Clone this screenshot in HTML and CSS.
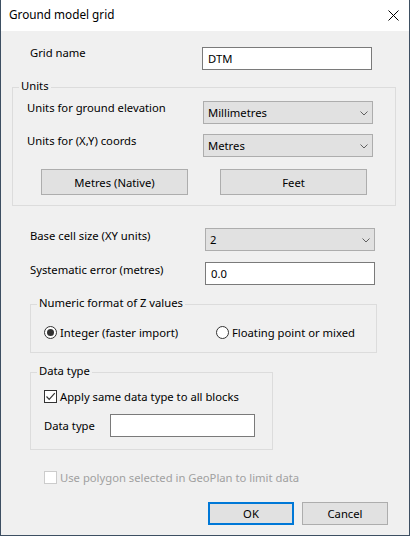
FILE: index.html
```html
<!DOCTYPE html>
<html>
<head>
<meta charset="utf-8">
<link rel="stylesheet" href="styles.css">
</head>
<body>
<div class="window">
  <div class="titlebar">
    <span class="title">Ground model grid</span>
    <svg class="close" width="11" height="11" viewBox="0 0 11 11"><path d="M0.5 0.5 L10.5 10.5 M10.5 0.5 L0.5 10.5" stroke="#000" stroke-width="1" fill="none"/></svg>
  </div>
  <div class="content">
    <div class="row gridname">
      <span class="label lbl-grid">Grid name</span>
      <div class="textbox tb-name">DTM</div>
    </div>

    <fieldset class="group units">
      <legend>Units</legend>
      <div class="group-body units-body">
        <div class="row">
          <span class="label lbl-units">Units for ground elevation</span>
          <div class="select">Millimetres<svg class="chev" width="8" height="5" viewBox="0 0 8 5"><path d="M0.5 0.5 L4 4 L7.5 0.5" stroke="#606060" stroke-width="1" fill="none"/></svg></div>
        </div>
        <div class="row row-gap">
          <span class="label lbl-units">Units for (X,Y) coords</span>
          <div class="select">Metres<svg class="chev" width="8" height="5" viewBox="0 0 8 5"><path d="M0.5 0.5 L4 4 L7.5 0.5" stroke="#606060" stroke-width="1" fill="none"/></svg></div>
        </div>
        <div class="btnrow">
          <div class="btn unitbtn">Metres (Native)</div>
          <div class="btn unitbtn">Feet</div>
        </div>
      </div>
    </fieldset>

    <div class="row basecell">
      <span class="label lbl-main">Base cell size (XY units)</span>
      <div class="select">2<svg class="chev" width="8" height="5" viewBox="0 0 8 5"><path d="M0.5 0.5 L4 4 L7.5 0.5" stroke="#606060" stroke-width="1" fill="none"/></svg></div>
    </div>
    <div class="row syserr">
      <span class="label lbl-main">Systematic error (metres)</span>
      <div class="textbox tb-main">0.0</div>
    </div>

    <fieldset class="group numeric">
      <legend>Numeric format of Z values</legend>
      <div class="group-body numeric-body">
        <div class="option opt-first"><span class="radio checked"></span><span>Integer (faster import)</span></div>
        <div class="option"><span class="radio"></span><span>Floating point or mixed</span></div>
      </div>
    </fieldset>

    <fieldset class="group datatype">
      <legend>Data type</legend>
      <div class="group-body datatype-body">
        <div class="option"><span class="checkbox"><svg width="11" height="11" viewBox="0 0 11 11"><path d="M1.5 5.5 L4.2 8.3 L9.8 2.2" stroke="#333" stroke-width="1.2" fill="none"/></svg></span><span>Apply same data type to all blocks</span></div>
        <div class="row dtrow">
          <span class="label lbl-dt">Data type</span>
          <div class="textbox tb-dt"></div>
        </div>
      </div>
    </fieldset>

    <div class="option disabled"><span class="checkbox off"></span><span>Use polygon selected in GeoPlan to limit data</span></div>

    <div class="footer">
      <div class="btn dlgbtn default">OK</div>
      <div class="btn dlgbtn">Cancel</div>
    </div>
  </div>
</div>
</body>
</html>
```

FILE: styles.css
```css
html, body {
  margin: 0;
  padding: 0;
  background: #f0f0f0;
}
body {
  font-family: "Noto Sans", "Liberation Sans", sans-serif;
  font-size: 11.25px;
  line-height: 15px;
  color: #000;
}
.window {
  width: 410px;
  height: 536px;
  box-sizing: border-box;
  border: 1px solid #3d4f62;
  border-top: none;
  background: #f0f0f0;
  display: flex;
  flex-direction: column;
}
.titlebar {
  height: 31px;
  background: #fff;
  display: flex;
  align-items: flex-start;
  justify-content: space-between;
  flex-shrink: 0;
}
.title {
  font-size: 11.75px;
  margin: 7px 0 0 8px;
}
.close {
  margin: 10px 10px 0 0;
}
.content {
  padding-top: 16px;
  display: flex;
  flex-direction: column;
  align-items: flex-start;
}
.row {
  display: flex;
  align-items: flex-start;
  height: 23px;
}
.label {
  flex-shrink: 0;
}
.gridname {
  margin-left: 29px;
}
.lbl-grid {
  width: 172px;
  margin-top: -2px;
}
.textbox {
  box-sizing: border-box;
  height: 23px;
  background: #fff;
  border: 1px solid #7a7a7a;
  padding: 3px 0 0 5px;
}
.tb-name { width: 170px; }
.tb-main { width: 170px; }
.tb-dt { width: 145px; }

.group {
  margin: 0;
  padding: 0;
  border: 1px solid #dcdcdc;
  min-inline-size: 0;
  box-sizing: border-box;
}
.group legend {
  padding: 0 2px 4px;
  margin-left: 6px;
  line-height: 15px;
}
.units {
  margin: 8px 0 0 11px;
  width: 384px;
}
.units-body {
  padding: 4px 0 10px 14px;
}
.lbl-units {
  width: 176px;
  margin-top: -1px;
}
.row-gap {
  margin-top: 10px;
}
.select {
  box-sizing: border-box;
  width: 170px;
  height: 23px;
  background: #e1e1e1;
  border: 1px solid #adadad;
  padding: 0 4px 0 4px;
  display: flex;
  align-items: center;
  justify-content: space-between;
}
.chev {
  margin-top: 1px;
}
.btnrow {
  display: flex;
  gap: 32px;
  margin: 12px 0 0 14px;
}
.btn {
  box-sizing: border-box;
  background: #e1e1e1;
  border: 1px solid #adadad;
  display: flex;
  align-items: center;
  justify-content: center;
}
.unitbtn {
  width: 147px;
  height: 26px;
}

.basecell {
  margin: 22px 0 0 29px;
}
.lbl-main {
  width: 175px;
}
.syserr {
  margin: 11px 0 0 29px;
}

.numeric {
  margin: 10px 0 0 29px;
  width: 347px;
}
.numeric-body {
  display: flex;
  padding: 11px 0 12px 13px;
}
.option {
  display: flex;
  align-items: center;
  gap: 3px;
  height: 15px;
}
.opt-first {
  width: 172px;
}
.radio {
  box-sizing: border-box;
  width: 13px;
  height: 13px;
  border: 1px solid #333;
  border-radius: 50%;
  background: #fff;
  display: flex;
  align-items: center;
  justify-content: center;
}
.radio.checked::after {
  content: "";
  width: 7px;
  height: 7px;
  border-radius: 50%;
  background: #333;
}

.datatype {
  margin: 10px 0 0 29px;
  width: 243px;
}
.datatype-body {
  padding: 7px 0 12px 13px;
}
.checkbox {
  box-sizing: border-box;
  width: 13px;
  height: 13px;
  border: 1px solid #333;
  background: #fff;
  display: flex;
  align-items: center;
  justify-content: center;
}
.checkbox.off {
  border-color: #cccccc;
}
.dtrow {
  margin-top: 10px;
  align-items: center;
}
.lbl-dt {
  width: 66px;
}

.disabled {
  margin: 20px 0 0 43px;
  color: #a0a0a0;
}

.footer {
  align-self: stretch;
  display: flex;
  justify-content: flex-end;
  gap: 8px;
  margin: 17px 21px 0 0;
}
.dlgbtn {
  width: 86px;
  height: 23px;
}
.dlgbtn.default {
  border: 2px solid #0078d7;
}
```
